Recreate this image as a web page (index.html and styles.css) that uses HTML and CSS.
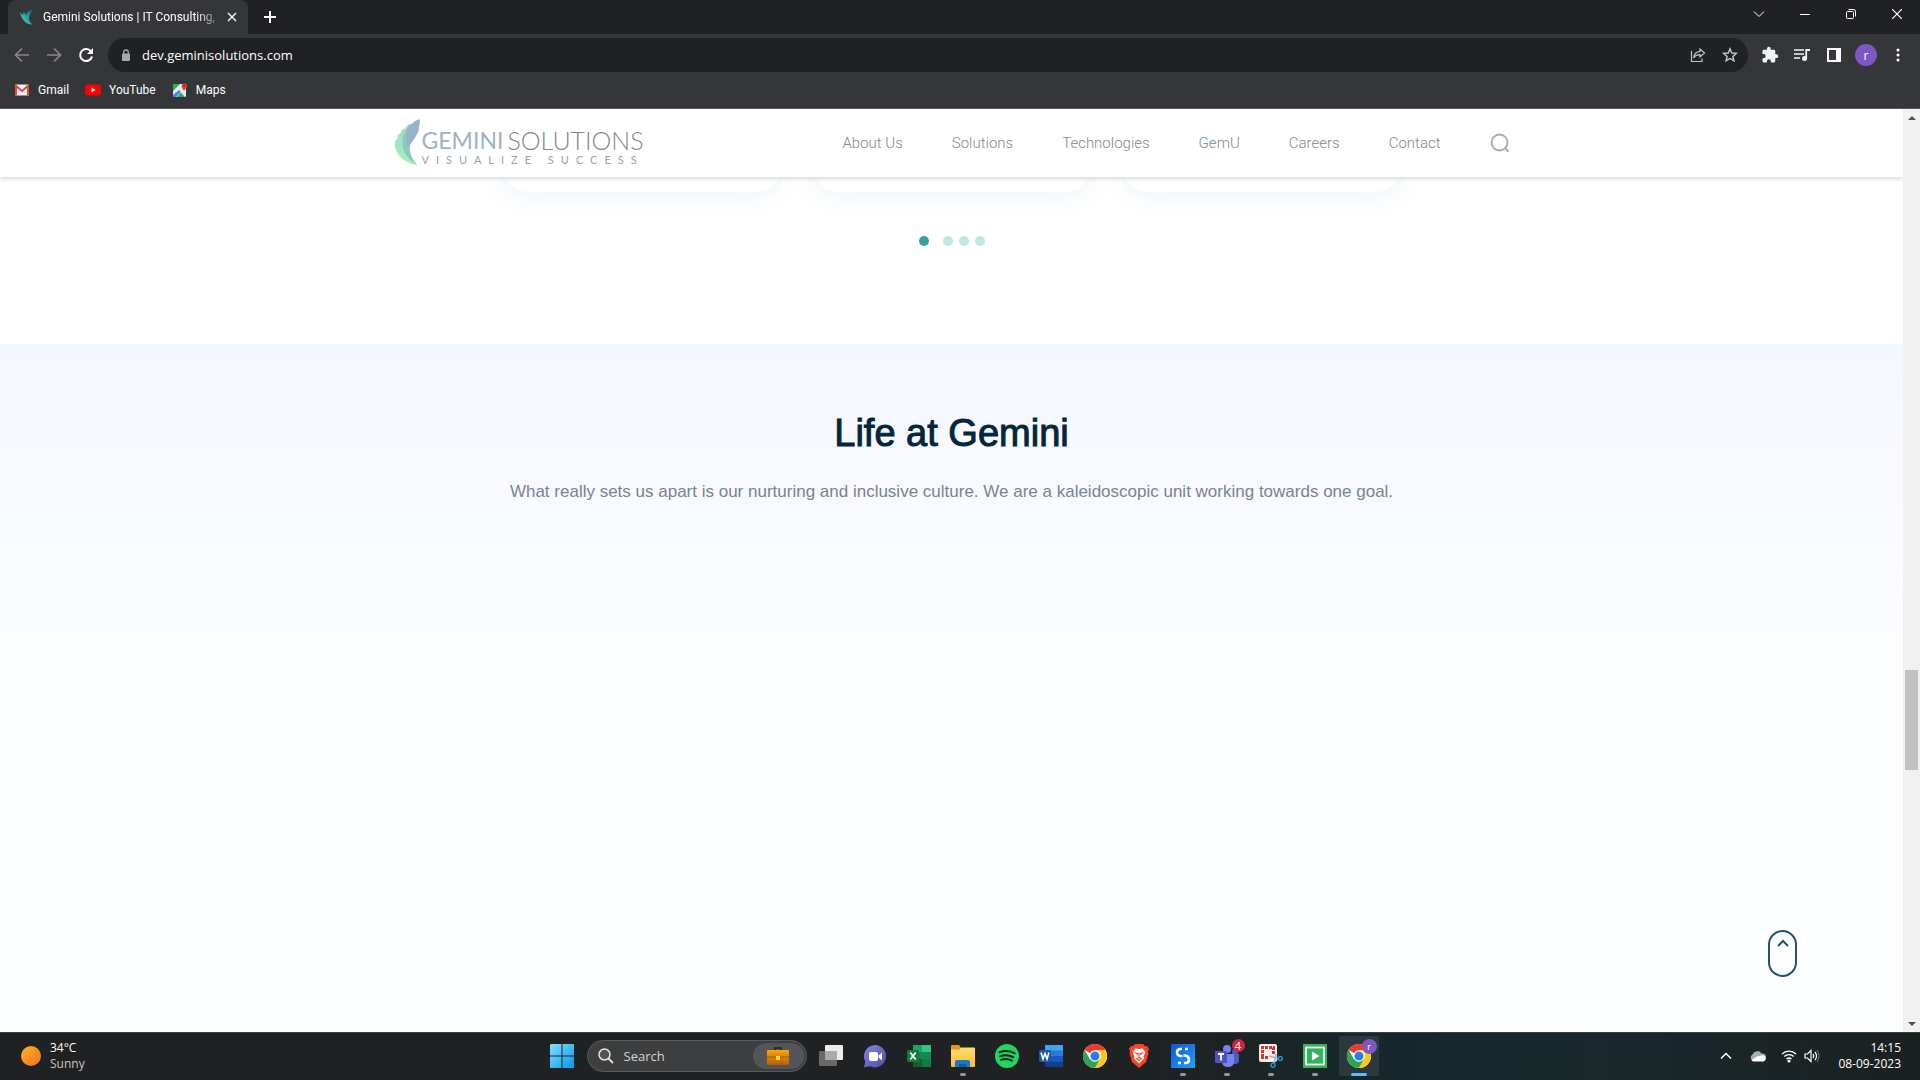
FILE: index.html
```html
<!DOCTYPE html>
<html lang="en">
<head>
<meta charset="utf-8">
<meta name="viewport" content="width=device-width, initial-scale=1">
<title>Gemini Solutions | IT Consulting</title>
<link rel="stylesheet" href="styles.css">
</head>
<body>
<svg class="defs" aria-hidden="true">
  <defs>
    <linearGradient id="gWin" x1="0" y1="0" x2="1" y2="1"><stop offset="0" stop-color="#7fe3ff"/><stop offset="1" stop-color="#0a94ee"/></linearGradient>
    <linearGradient id="gSun" x1="0" y1="0" x2="1" y2="1"><stop offset="0" stop-color="#fbb325"/><stop offset="1" stop-color="#f3701f"/></linearGradient>
    <linearGradient id="gCase" x1="0" y1="0" x2="0" y2="1"><stop offset="0" stop-color="#f9a80d"/><stop offset="1" stop-color="#b65d06"/></linearGradient>
    <linearGradient id="gChat" x1="0" y1="0" x2="1" y2="1"><stop offset="0" stop-color="#8486e0"/><stop offset="1" stop-color="#5049a8"/></linearGradient>
    <linearGradient id="gFold" x1="0" y1="0" x2="0" y2="1"><stop offset="0" stop-color="#ffdc70"/><stop offset="1" stop-color="#fbbf30"/></linearGradient>
    <linearGradient id="gBlue" x1="0" y1="0" x2="1" y2="1"><stop offset="0" stop-color="#0b55d8"/><stop offset="1" stop-color="#22a4f5"/></linearGradient>
    <linearGradient id="gWing" x1="0" y1="0" x2="0" y2="1"><stop offset="0" stop-color="#9fdcc9"/><stop offset="1" stop-color="#a9efb9"/></linearGradient>
    <linearGradient id="gFav" x1="1" y1="0" x2="0" y2="1"><stop offset="0" stop-color="#1f5d94"/><stop offset=".5" stop-color="#2ba59a"/><stop offset="1" stop-color="#74dfa0"/></linearGradient>
    <symbol id="chrome" viewBox="0 0 24 24">
      <circle cx="12" cy="12" r="12" fill="#fff"/>
      <path d="M12 12 1.600 6A12 12 0 0 1 22.400 6L12 6Z" fill="#ea3b2e"/>
      <path d="M1.600 6A12 12 0 0 0 12 24L17.200 15 12 12 6.800 15Z" fill="#2fa350"/>
      <path d="M22.400 6A12 12 0 0 1 12 24L17.200 15 12 6Z" fill="#fdc916"/>
      <circle cx="12" cy="12" r="5.800" fill="#fff"/><circle cx="12" cy="12" r="4.500" fill="#2f7bea"/>
    </symbol>
  </defs>
</svg>

<header class="browser">
  <div class="tabstrip">
    <div class="tab">
      <svg width="16" height="16" viewBox="0 0 16 16"><path d="M1 3.500C2 4.500 3 5 4 6 4 4.500 4.500 3 5 2.500 5.500 4 6 5 7 6 8 3 10 1.500 13.500 1 12 4 10.500 6 10 8.500 9.500 11 11 13.500 13.500 15.500 9 15.500 6 13.500 4.500 11 3 9 1.500 7 1 3.500Z" fill="url(#gFav)"/></svg>
      <span class="tab-title">Gemini Solutions | IT Consulting,</span>
      <button class="tab-close" aria-label="Close tab"><svg width="10" height="10" viewBox="0 0 10 10"><path d="M1 1 9 9M9 1 1 9" stroke="#f1f3f4" stroke-width="1.500"/></svg></button>
    </div>
    <button class="new-tab" aria-label="New tab"><svg width="12" height="12" viewBox="0 0 12 12"><path d="M6 0V12M0 6H12" stroke="#fff" stroke-width="2"/></svg></button>
    <div class="window-controls">
      <button aria-label="Search tabs"><svg width="12" height="12" viewBox="0 0 12 12"><path d="M1 3.500 6 8.500 11 3.500" fill="none" stroke="#fff"/></svg></button>
      <button aria-label="Minimize"><svg width="10" height="10" viewBox="0 0 10 10"><path d="M0 5.500H10" stroke="#fff"/></svg></button>
      <button aria-label="Restore"><svg width="10" height="10" viewBox="0 0 10 10"><rect x=".5" y="2.500" width="7" height="7" rx="1" fill="none" stroke="#fff"/><path d="M2.500.5H7.500A2 2 0 0 1 9.500 2.500V7.500" fill="none" stroke="#fff"/></svg></button>
      <button aria-label="Close"><svg width="10" height="10" viewBox="0 0 10 10"><path d="M0 0 10 10M10 0 0 10" stroke="#fff" stroke-width="1.200"/></svg></button>
    </div>
  </div>
  <div class="toolbar">
    <button class="tool" aria-label="Back"><svg width="16" height="16" viewBox="0 0 16 16"><path d="M15 8H2M8 1.500 1.500 8 8 14.500" fill="none" stroke="#86888b" stroke-width="1.700"/></svg></button>
    <button class="tool" aria-label="Forward"><svg width="16" height="16" viewBox="0 0 16 16"><path d="M1 8H14M8 1.500 14.500 8 8 14.500" fill="none" stroke="#86888b" stroke-width="1.700"/></svg></button>
    <button class="tool" aria-label="Reload"><svg width="16" height="16" viewBox="0 0 16 16"><path d="M13 4.500A6 6 0 1 0 14 9.500" fill="none" stroke="#fff" stroke-width="2"/><path d="M15 1V7H9Z" fill="#fff"/></svg></button>
    <div class="omnibox">
      <svg width="10" height="13" viewBox="0 0 10 13"><rect x="1" y="4.500" width="8" height="7.500" rx="1" fill="#a5a8ac"/><path d="M2.700 5V3.300A2.300 2.300 0 0 1 7.300 3.300V5" fill="none" stroke="#a5a8ac" stroke-width="1.300"/></svg>
      <input type="text" value="dev.geminisolutions.com" aria-label="Address">
      <button class="tool" aria-label="Share"><svg width="16" height="16" viewBox="0 0 16 16"><path d="M1.500 4V14.500H12V11.500M10 2 14.500 6 10 10V7.700C7 7.700 5 8.700 3.700 11 4 7.500 6 4.600 10 4.300Z" fill="none" stroke="#c1c4c8" stroke-width="1.200"/></svg></button>
      <button class="tool" aria-label="Bookmark this tab"><svg width="16" height="16" viewBox="0 0 16 16"><path d="M8 1.800 9.800 6 14.300 6.400 10.900 9.400 11.900 13.900 8 11.500 4.100 13.900 5.100 9.400 1.700 6.400 6.200 6Z" fill="none" stroke="#c8cbcf" stroke-width="1.400"/></svg></button>
    </div>
    <button class="tool" aria-label="Extensions"><svg width="18" height="18" viewBox="0 0 24 24"><path d="M20.500 11H19V7c0-1.100-.9-2-2-2h-4V3.500a2.500 2.500 0 0 0-5 0V5H4c-1.100 0-2 .9-2 2v3.800h1.500a2.700 2.700 0 0 1 0 5.400H2V20c0 1.100.9 2 2 2h3.800v-1.500a2.700 2.700 0 0 1 5.400 0V22H17c1.100 0 2-.9 2-2v-4h1.500a2.500 2.500 0 0 0 0-5Z" fill="#f1f3f4"/></svg></button>
    <button class="tool" aria-label="Media controls"><svg width="16" height="14" viewBox="0 0 16 14"><path d="M0 2H10M0 6H10M0 10H6" stroke="#f1f3f4" stroke-width="1.600"/><circle cx="10.500" cy="10.500" r="2.500" fill="#f1f3f4"/><path d="M12.200 11V2H16" fill="none" stroke="#f1f3f4" stroke-width="1.800"/></svg></button>
    <button class="tool" aria-label="Side panel"><svg width="14" height="14" viewBox="0 0 14 14"><path d="M0 0H14V14H0ZM2 2V12H9V2Z" fill="#fff" fill-rule="evenodd"/></svg></button>
    <button class="tool" aria-label="Profile"><span class="avatar">r</span></button>
    <button class="tool" aria-label="Menu"><svg width="4" height="14" viewBox="0 0 4 14"><circle cx="2" cy="2" r="1.500" fill="#fff"/><circle cx="2" cy="7" r="1.500" fill="#fff"/><circle cx="2" cy="12" r="1.500" fill="#fff"/></svg></button>
  </div>
  <nav class="bookmarks" aria-label="Bookmarks">
    <a href="#"><svg width="16" height="16" viewBox="0 0 16 16"><path d="M1 2.500H15V13.500H1Z" fill="#f1eeee"/><path d="M2 13.500V4L8 9 14 4V13.500" fill="none" stroke="#d84a42" stroke-width="2"/></svg>Gmail</a>
    <a href="#"><svg width="16" height="16" viewBox="0 0 16 16"><rect y="2.500" width="16" height="11" rx="3" fill="#f00"/><path d="M6.500 5.500V10.500L10.500 8Z" fill="#fff"/></svg>YouTube</a>
    <a href="#"><svg width="16" height="16" viewBox="0 0 16 16"><rect x="1" y="2" width="13" height="13" rx="1" fill="#e8eaec"/><path d="M1 2H8L1 9Z" fill="#35a854"/><path d="M1 13V15H4L9 10 7 8Z" fill="#4386f5"/><path d="M5 15 9 10.500 13 15Z" fill="#35a854"/><path d="M12 9C11 7 9.500 6 9.500 3.700A2.800 2.800 0 0 1 15 3.700C15 6 13 7 12 9Z" fill="#e54335"/><circle cx="12.200" cy="3.800" r="1" fill="#8b1f17"/></svg>Maps</a>
  </nav>
</header>

<div class="viewport">
  <div class="site">
    <header class="site-header">
      <div class="header-inner">
        <a class="logo" href="#">
          <svg width="28" height="48" viewBox="0 0 28 48"><path d="M17 5C14 5 12 7 11.500 10 9 9 7 11 7 14 4.500 14 3.500 17 3.500 20 1.500 20 .5 23 1 27 2 36 10 44 23 46 18 41 15.500 35 15.500 28Z" fill="url(#gWing)"/><path d="M17 5C11 10 8 17 8.500 25 9 33 14 41 23 46 18 40 15.500 34 15.500 28Z" fill="#8ccbc0"/><path d="M26 0C19 2 14.500 7 13 14 11.500 20 12.500 25 14.500 30 17 22 25 16 25 9 25.500 5 26 3 26 0Z" fill="#9db0c9"/></svg>
          <span class="wordmark">
            <span class="name"><b>GEMINI</b><span>SOLUTIONS</span></span>
            <span class="tagline">VISUALIZE SUCCESS</span>
          </span>
        </a>
        <nav class="site-nav" aria-label="Main">
          <a href="#">About Us</a><a href="#">Solutions</a><a href="#">Technologies</a><a href="#">GemU</a><a href="#">Careers</a><a href="#">Contact</a>
          <button aria-label="Search"><svg width="20" height="20" viewBox="0 0 20 20"><circle cx="9.500" cy="9.500" r="8" fill="none" stroke="#a9abad" stroke-width="1.800"/><path d="M15 15 18.500 18.500" stroke="#a9abad" stroke-width="2"/></svg></button>
        </nav>
      </div>
    </header>
    <main>
      <section class="carousel">
        <div class="cards"><div class="card"></div><div class="card"></div><div class="card"></div></div>
        <div class="dots"><button class="active" aria-label="Slide 1"></button><button aria-label="Slide 2"></button><button aria-label="Slide 3"></button><button aria-label="Slide 4"></button></div>
      </section>
      <section class="life">
        <h1>Life at Gemini</h1>
        <p>What really sets us apart is our nurturing and inclusive culture. We are a kaleidoscopic unit working towards one goal.</p>
      </section>
    </main>
    <button class="to-top" aria-label="Back to top"><svg width="12" height="8" viewBox="0 0 12 8"><path d="M1 7 6 2 11 7" fill="none" stroke="#26536c" stroke-width="2"/></svg></button>
  </div>
  <div class="scrollbar" aria-hidden="true">
    <svg width="8" height="4" viewBox="0 0 8 4"><path d="M0 4 4 0 8 4Z" fill="#505050"/></svg>
    <span class="thumb"></span>
    <svg width="8" height="4" viewBox="0 0 8 4"><path d="M0 0 4 4 8 0Z" fill="#505050"/></svg>
  </div>
</div>

<footer class="taskbar">
  <button class="weather">
    <svg width="20" height="20" viewBox="0 0 20 20"><circle cx="10" cy="10" r="10" fill="url(#gSun)"/></svg>
    <span><span class="temp">34°C</span><span class="sky">Sunny</span></span>
  </button>
  <div class="apps">
    <button class="app" aria-label="Start"><svg width="24" height="24" viewBox="0 0 24 24"><path d="M1 0H11.500V11.500H0V1ZM12.500 0H24V11.500H12.500ZM0 12.500H11.500V24H0ZM12.500 12.500H24V24H12.500Z" fill="url(#gWin)"/></svg></button>
    <div class="search">
      <svg width="16" height="16" viewBox="0 0 16 16"><circle cx="6.500" cy="6.500" r="5.500" fill="#505254" stroke="#e2e2e2" stroke-width="1.500"/><path d="M10.500 10.500 15 15" stroke="#e2e2e2" stroke-width="1.800"/></svg>
      <input type="text" placeholder="Search" aria-label="Search">
      <span class="highlight"><svg width="22" height="18" viewBox="0 0 22 18"><path d="M8 3V1H14V3" fill="none" stroke="#3a2c1c" stroke-width="2"/><rect y="3" width="22" height="15" rx="1" fill="url(#gCase)"/><path d="M0 10H22" stroke="#a35407"/><rect x="9" y="9" width="4" height="4" fill="#ffdf3b"/></svg></span>
    </div>
    <button class="app" aria-label="Task view"><svg width="24" height="24" viewBox="0 0 24 24"><rect x="6" y="1" width="18" height="15" rx="1" fill="#ececec"/><rect x="0" y="7" width="18" height="15" rx="1" fill="#777" fill-opacity=".85"/><path d="M6 7H18V16H6Z" fill="#ababab"/></svg></button>
    <button class="app" aria-label="Chat"><svg width="24" height="24" viewBox="0 0 24 24"><path d="M12 1A11.200 11.200 0 1 1 7 22.300L1 23.500 2.300 17.500A11.200 11.200 0 0 1 12 1Z" fill="url(#gChat)"/><rect x="6" y="8" width="9" height="9" rx="2" fill="#fff"/><path d="M15.500 11.500 19 8.500V16.500L15.500 13.500Z" fill="#fff"/></svg></button>
    <button class="app" aria-label="Excel"><svg width="24" height="24" viewBox="0 0 24 24"><rect x="6" y="1" width="18" height="22" rx="1" fill="#188650"/><path d="M6 1H15V8H6Z" fill="#21a366"/><path d="M15 1H24V8H15Z" fill="#33c481"/><path d="M15 15H24V23H15ZM6 15H15V23H6Z" fill="#185c37"/><path d="M15 15H24V23H15Z" fill="#107c41"/><rect y="6" width="12" height="12" rx="1" fill="#107a40"/><path d="M3.300 8.500 8.700 15.500M8.700 8.500 3.300 15.500" stroke="#fff" stroke-width="1.800"/></svg></button>
    <button class="app open" aria-label="File Explorer"><svg width="24" height="24" viewBox="0 0 24 24"><path d="M0 2Q0 1 1 1H8L10 3.500V7H0Z" fill="#e29a13"/><path d="M0 5.500H8L10.500 3.500H23Q24 3.500 24 4.500V22Q24 23 23 23H1Q0 23 0 22Z" fill="url(#gFold)"/><path d="M4 23V18Q4 16 6 16H17Q19 16 19 18V23Z" fill="#1877cc"/><path d="M8 20H15V23H8Z" fill="#125a9f"/></svg></button>
    <button class="app" aria-label="Spotify"><svg width="24" height="24" viewBox="0 0 24 24"><circle cx="12" cy="12" r="12" fill="#1ed760"/><path d="M4.500 8.200Q12.500 5.500 19.800 9.300M5.300 12.200Q12 9.900 18.300 13.100M6 15.900Q12 14 16.800 16.700" fill="none" stroke="#191c1a" stroke-width="2" stroke-linecap="round"/></svg></button>
    <button class="app" aria-label="Word"><svg width="24" height="24" viewBox="0 0 24 24"><rect x="6" y="1" width="18" height="22" rx="1" fill="#2b7cd3"/><path d="M6 1H24V6.500H6Z" fill="#41a5ee"/><path d="M6 12H24V17.500H6Z" fill="#185abd"/><path d="M6 17.500H24V23H6Z" fill="#103f91"/><rect y="6" width="12" height="12" rx="1" fill="#1b55ae"/><path d="M2 8.500 4 15 6 9.500 8 15 10 8.500" fill="none" stroke="#fff" stroke-width="1.600"/></svg></button>
    <button class="app" aria-label="Chrome"><svg width="24" height="24"><use href="#chrome"/></svg></button>
    <button class="app" aria-label="Brave"><svg width="20" height="24" viewBox="0 0 20 24"><path d="M6 0H14L16 2.200 18 2 20 5 19 7.500 19.500 9 17 18 10 24 3 18 .5 9 1 7.500 0 5 2 2 4 2.200Z" fill="#f5452a"/><path d="M10 5 13.500 4.500 16.500 8 14.500 12.500 15 14.500 10 19.500 5 14.500 5.500 12.500 3.500 8 6.500 4.500Z" fill="#fff"/><path d="M5.500 8.500 8.500 9.500 8 11M14.500 8.500 11.500 9.500 12 11M10 9V14M7.500 14.500 10 13.500 12.500 14.500 10 16.500Z" fill="none" stroke="#f5452a" stroke-width="1.200"/></svg></button>
    <button class="app open" aria-label="Studio"><svg width="24" height="24" viewBox="0 0 24 24"><rect width="24" height="24" fill="url(#gBlue)"/><path d="M11 5H9.500Q6 5 6 8.500 6 11.500 9.500 12H11.500M14 5H17M12.500 11.500H14.500Q18 12.500 18 15.500 18 19 14.500 19H13M10 19H7" fill="none" stroke="#fff" stroke-width="2.500"/></svg></button>
    <button class="app open" aria-label="Teams"><svg width="24" height="24" viewBox="0 0 24 24"><circle cx="12" cy="5" r="4" fill="#7b83eb"/><circle cx="20" cy="8" r="3" fill="#5059c9"/><path d="M17 10H24V16Q24 20 20 20H17Z" fill="#5059c9"/><path d="M7 10H19V17Q19 23 13 23T7 17Z" fill="#7b83eb"/><rect y="7" width="12" height="12" rx="1" fill="#4b53bc"/><path d="M3 10H9M6 10V16.500" stroke="#fff" stroke-width="1.800"/></svg><span class="badge count">4</span></button>
    <button class="app open" aria-label="Snipping Tool"><svg width="24" height="24" viewBox="0 0 24 24"><rect width="18" height="18" rx="2" fill="#f5eeee"/><path d="M3.500 13V3.500H14.500V10" fill="none" stroke="#c43c2b" stroke-width="3" stroke-dasharray="3 1"/><path d="M2 13.500H10" stroke="#c43c2b" stroke-width="3" stroke-dasharray="3 1"/><path d="M10 12 20 15M15 20 17 10" stroke="#9fb4c2" stroke-width="1.500"/><circle cx="21.300" cy="14.500" r="2" fill="none" stroke="#2295d8" stroke-width="1.500"/><circle cx="14" cy="21.300" r="2" fill="none" stroke="#2295d8" stroke-width="1.500"/></svg></button>
    <button class="app open" aria-label="Recorder"><svg width="24" height="24" viewBox="0 0 24 24"><rect width="24" height="24" fill="#36b35e"/><rect x="3" y="3.500" width="18" height="17" fill="none" stroke="#fff" stroke-width="1.700"/><path d="M9 7.500V16.500L16.500 12Z" fill="#fff"/></svg></button>
    <button class="app open current" aria-label="Chrome, profile r"><svg width="24" height="24"><use href="#chrome"/></svg><span class="badge profile">r</span></button>
  </div>
  <div class="tray">
    <button aria-label="Hidden icons"><svg width="12" height="12" viewBox="0 0 12 12"><path d="M1 8.500 6 3.500 11 8.500" fill="none" stroke="#fff" stroke-width="1.500"/></svg></button>
    <button class="cloud" aria-label="OneDrive"><svg width="16" height="12" viewBox="0 0 16 12"><path d="M3.500 11A3.500 3.500 0 0 1 2.500 4.500 5 5 0 0 1 11.500 3.500 3.800 3.800 0 0 1 13 11Z" fill="#a8aaac"/><path d="M3 11.500 1.500 10 7 6.500 11 5.500A3.200 3.200 0 0 1 13.500 11.500Z" fill="#fff"/></svg></button>
    <button class="status" aria-label="Network and volume"><svg width="16" height="14" viewBox="0 0 16 14"><path d="M1 5A10 10 0 0 1 15 5M3.200 7.500A7 7 0 0 1 12.800 7.500M5.500 10A4 4 0 0 1 10.500 10" fill="none" stroke="#fff" stroke-width="1.300"/><circle cx="8" cy="12" r="1.500" fill="#fff"/></svg><svg width="16" height="14" viewBox="0 0 16 14"><path d="M1 5V9H3.500L7 12.500V1.500L3.500 5Z" fill="none" stroke="#fff" stroke-width="1.200"/><path d="M9 4.800Q10.500 7 9 9.200M11 2.800Q14 7 11 11.200" fill="none" stroke="#fff" stroke-width="1.200"/><path d="M13 1Q17 7 13 13" fill="none" stroke="#777"/></svg></button>
    <time datetime="2023-09-08T14:15">14:15<br>08-09-2023</time>
  </div>
</footer>
</body>
</html>
```
FILE: styles.css
```css
* { box-sizing: border-box; }
body {
  margin: 0;
  height: 100vh;
  display: flex;
  flex-direction: column;
  overflow: hidden;
  font-family: "Open Sans", "Noto Sans", sans-serif;
  font-size: 12px;
  color: #fff;
}
button { padding: 0; border: 0; background: none; font: inherit; color: inherit; }
input { min-width: 0; padding: 0; border: 0; background: none; font: inherit; color: inherit; outline: 0; }
a { color: inherit; text-decoration: none; }
svg { display: block; flex: none; }
.defs { position: absolute; width: 0; height: 0; }

/* Browser frame */
.browser { flex: none; background: #35363a; border-bottom: 1px solid #57585b; }
.tabstrip { display: flex; height: 34px; padding-left: 8px; background: #202124; }
.tab {
  display: flex;
  align-items: center;
  gap: 8px;
  width: 240px;
  padding: 0 8px 0 11px;
  background: #35363a;
  border-radius: 8px 8px 0 0;
  font-family: Roboto, sans-serif;
}
.tab-title {
  flex: 1;
  white-space: nowrap;
  mask-image: linear-gradient(to right, #000 88%, rgba(0, 0, 0, .3));
}
.tab-close { display: grid; place-items: center; width: 16px; height: 16px; }
.new-tab { display: grid; place-items: center; width: 28px; margin-left: 8px; }
.window-controls { display: flex; margin-left: auto; }
.window-controls button { display: grid; place-items: center; width: 46px; height: 28px; }
.toolbar { display: flex; align-items: center; height: 42px; padding: 0 6px; }
.tool { display: grid; place-items: center; flex: none; width: 32px; height: 32px; }
.omnibox {
  flex: 1;
  display: flex;
  align-items: center;
  height: 34px;
  margin: 0 6px;
  padding: 0 2px 0 13px;
  border-radius: 17px;
  background: #202124;
}
.omnibox input { flex: 1; margin-left: 11px; font-size: 13px; }
.avatar {
  display: grid;
  place-items: center;
  width: 22px;
  height: 22px;
  border-radius: 50%;
  background: #7e57c2;
}
.bookmarks { display: flex; gap: 16px; height: 32px; padding: 0 14px; font-family: Roboto, sans-serif; }
.bookmarks a { display: flex; align-items: center; gap: 8px; height: 28px; }

/* Page area */
.viewport { flex: 1; display: flex; min-height: 0; }
.site {
  position: relative;
  flex: 1;
  display: flex;
  flex-direction: column;
  overflow: hidden;
  background: #fff;
  font-family: "Liberation Sans", Arial, sans-serif;
}
.site-header {
  position: relative;
  z-index: 1;
  height: 68px;
  background: #fff;
  box-shadow: 0 1px 5px rgba(0, 0, 0, .2);
}
.header-inner {
  display: flex;
  align-items: center;
  justify-content: space-between;
  max-width: 1116px;
  height: 100%;
  margin: 0 auto;
}
.logo { display: flex; }
.wordmark { display: flex; flex-direction: column; padding-top: 7px; font-family: Lato, sans-serif; }
.name { display: flex; gap: 4px; font-size: 25px; line-height: 28px; font-weight: 300; color: #85888b; }
.name b { font-size: 23px; color: #9fb1c5; }
.tagline { font-size: 11px; line-height: 12px; letter-spacing: 7px; color: #a0a2a5; }
.site-nav { display: flex; align-items: center; gap: 49px; font-family: Roboto, sans-serif; font-size: 15px; font-weight: 300; color: #7d8a96; }

main { flex: 1; display: flex; flex-direction: column; }
.carousel { height: 167px; }
.cards { display: flex; justify-content: center; gap: 26px; }
.card {
  width: 284px;
  height: 60px;
  margin-top: -45px;
  border-radius: 30px;
  background: #fff;
  box-shadow: 0 6px 24px rgba(20, 120, 170, .07);
}
.dots { display: flex; justify-content: center; gap: 6px; margin-top: 44px; }
.dots button { width: 10px; height: 10px; border-radius: 50%; background: #bde6e5; }
.dots .active { margin-right: 8px; background: #37a19c; }
.life {
  flex: 1;
  padding: 61px 20px;
  background: linear-gradient(#f3f7fe, #f9faff 160px, #fcfdff 300px, #fcfdff);
  text-align: center;
}
.life h1 { margin: 0; font-size: 38px; line-height: 56px; font-weight: 400; -webkit-text-stroke: 1px #04263a; color: #04263a; }
.life p { margin: 17px 0 0; font-size: 17px; line-height: 28px; color: #7b8291; }
.to-top {
  position: absolute;
  right: 106px;
  bottom: 55px;
  width: 29px;
  height: 47px;
  padding-top: 7px;
  border: 2px solid #26536c;
  border-radius: 15px;
  display: flex;
  justify-content: center;
  align-items: flex-start;
}
.scrollbar {
  display: grid;
  grid-template-rows: 17px 544fr 100px 245fr 17px;
  place-items: center;
  width: 17px;
  background: #f1f1f1;
}
.thumb { grid-row: 3; width: 13px; height: 100%; background: #c1c1c1; }
.scrollbar svg:last-child { grid-row: 5; }

/* Taskbar */
.taskbar {
  flex: none;
  display: grid;
  grid-template-columns: 1fr auto 1fr;
  height: 48px;
  box-shadow: inset 0 1px #3d3f40;
  background: linear-gradient(to right, #202122, #202122 60%, #16282c 73%, #192a2d 82%, #1b2022);
}
.weather { display: flex; align-items: center; justify-self: start; gap: 9px; padding-left: 21px; text-align: left; }
.weather > span { display: grid; line-height: 16px; }
.sky { color: #c5c6c7; }
.apps { display: flex; align-items: center; }
.app { position: relative; display: grid; place-items: center; width: 44px; height: 40px; }
.app.open::after {
  content: "";
  position: absolute;
  left: 19px;
  bottom: 0;
  width: 6px;
  height: 3px;
  border-radius: 2px;
  background: #98999a;
}
.app.current { background: linear-gradient(#2c393c, #2c393c) center / 40px 100% no-repeat; }
.app.current::after { left: 14px; width: 16px; background: #5cc0f5; }
.badge {
  position: absolute;
  top: 3px;
  right: 4px;
  display: grid;
  place-items: center;
  width: 13px;
  height: 13px;
  border-radius: 50%;
  font-size: 11px;
  line-height: 13px;
}
.count { background: #d3213f; }
.profile { background: #7e57c2; width: 15px; height: 15px; font-size: 9px; }
.search {
  display: flex;
  align-items: center;
  width: 220px;
  height: 32px;
  margin: 0 2px 0 3px;
  padding: 0 2px 0 10px;
  border: 1px solid #595a5b;
  border-radius: 16px;
  background: #3d3e40;
}
.search input { flex: 1; margin-left: 10px; font-size: 13px; }
.search input::placeholder { color: #d2d3d3; opacity: 1; }
.highlight { display: grid; place-items: center; width: 51px; height: 26px; border-radius: 13px; background: #545557; }
.tray { display: flex; align-items: center; justify-content: flex-end; padding-right: 19px; }
.tray button { display: grid; place-items: center; width: 32px; height: 40px; }
.tray .status { display: flex; align-items: center; justify-content: center; gap: 7px; width: 44px; margin: 0 16px 0 4px; }
.tray time { text-align: right; line-height: 16px; }
```
